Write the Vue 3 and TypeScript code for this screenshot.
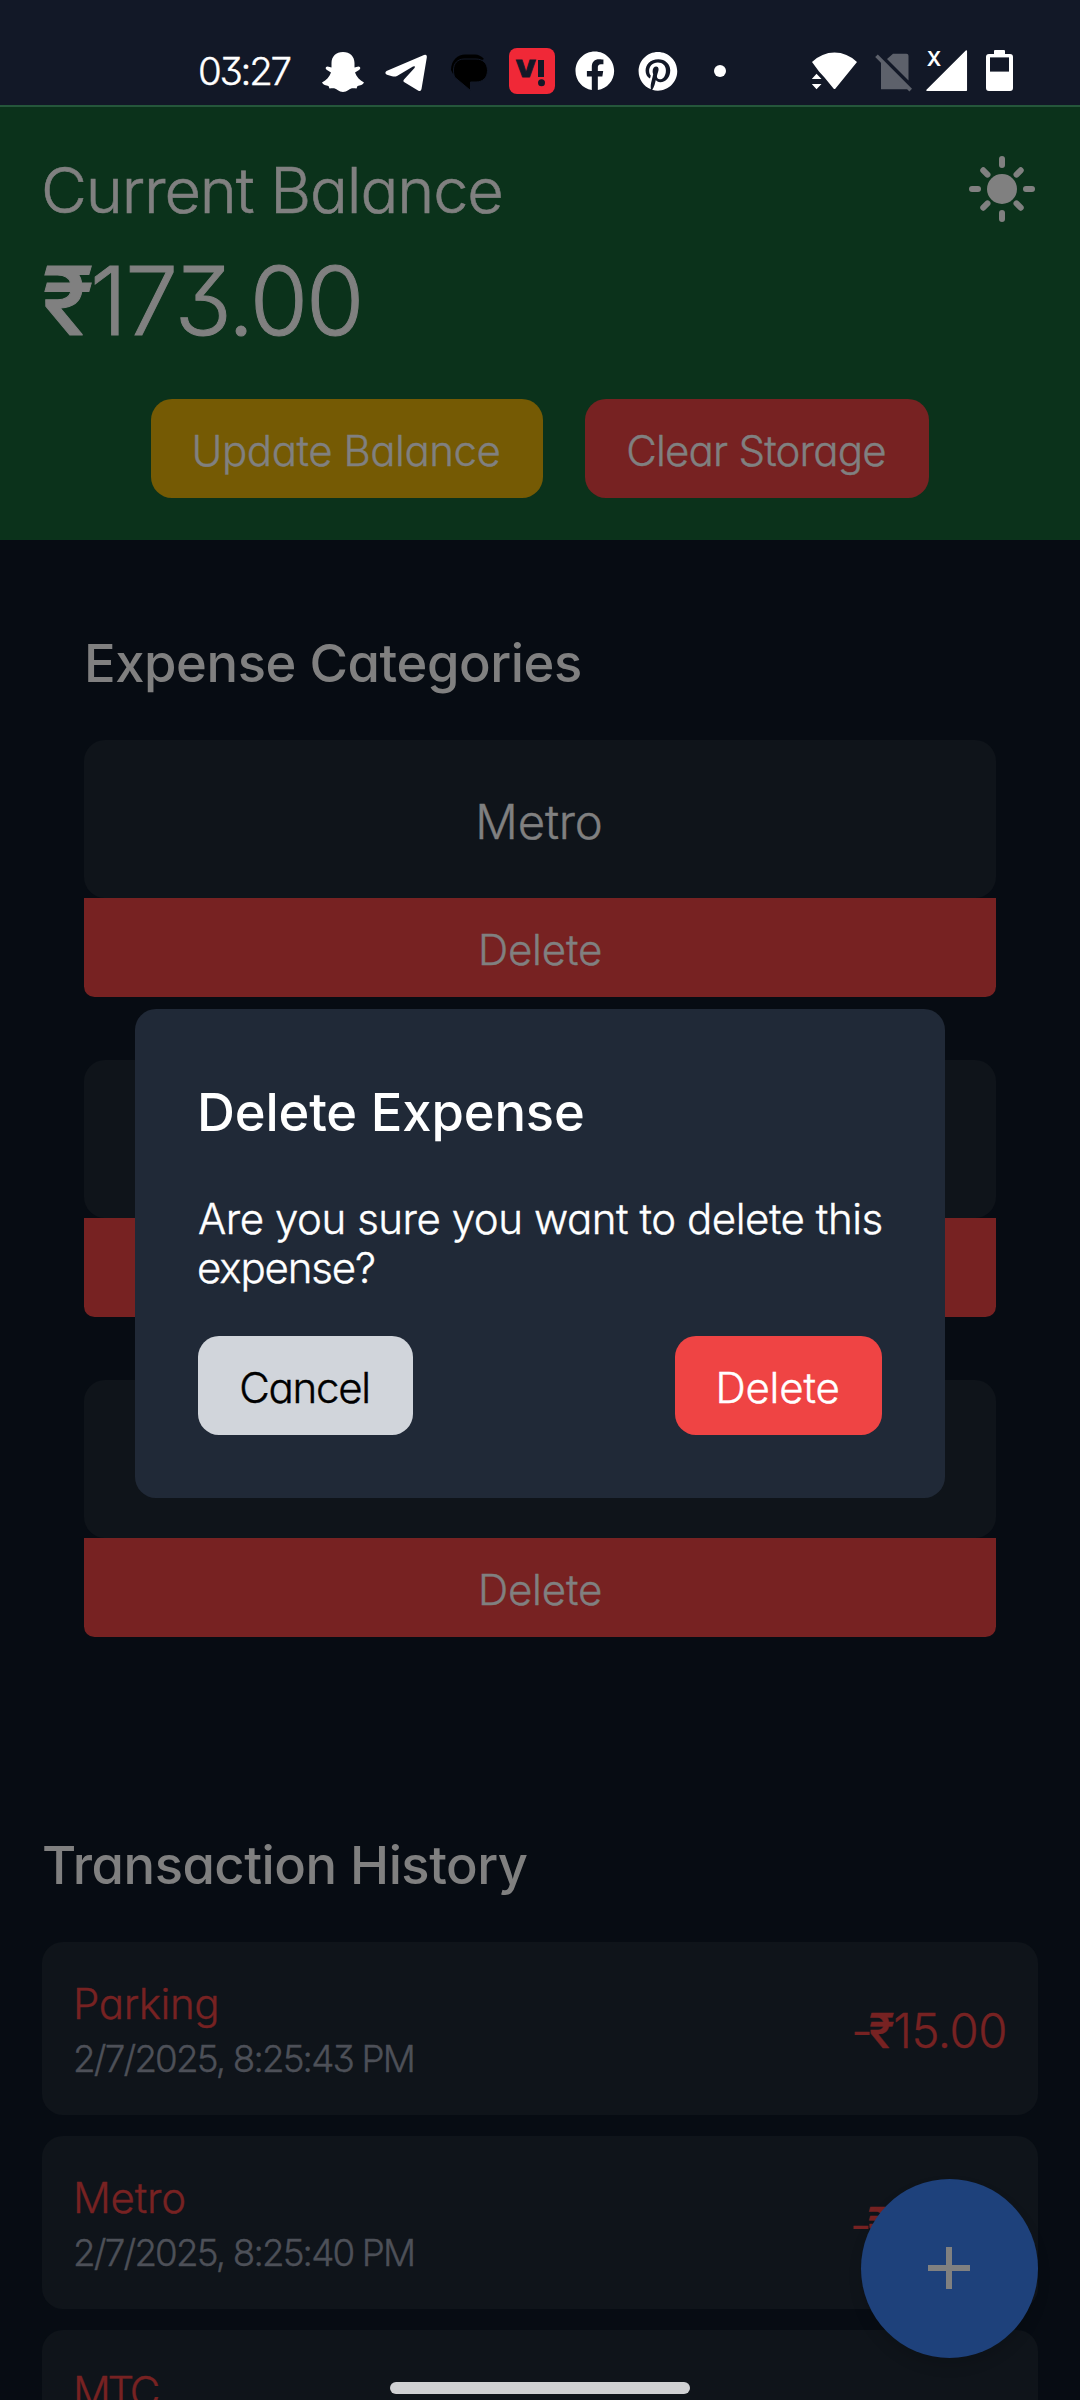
<script setup lang="ts">
interface Category { id: number; label?: string; action?: string }
interface Transaction { id: number; name: string; cls: string; date?: string; amount?: string }

const categories: Category[] = [
  { id: 1, label: 'Metro', action: 'Delete' },
  { id: 2 },
  { id: 3, action: 'Delete' },
]
const transactions: Transaction[] = [
  { id: 1, name: 'Parking', cls: 'n1', date: '2/7/2025, 8:25:43 PM', amount: '15.00' },
  { id: 2, name: 'Metro', cls: 'n2', date: '2/7/2025, 8:25:40 PM', amount: '10.00' },
  { id: 3, name: 'MTC', cls: 'n3' },
]
const rays = [0, 45, 90, 135, 180, 225, 270, 315]
</script>

<template>
  <div class="screen">
    <div class="status">
      <span class="time">03:27</span>
      <svg class="notifs" width="430" height="68" viewBox="310 37 430 68">
        <path fill="#fff" d="M343 52C350 52 354.5 56.500 354.500 63V67.500L358.500 66.500C360.800 67 360.800 69 359 70L355 72.500C356.500 77 359.500 80 364 82.500C363 85 360 85.500 357.500 86L356.500 88.600C352 88 350.500 88.500 348.500 90C345 92.600 341 92.600 337.500 90C335.500 88.500 334 88 329.500 88.600L328.500 86C326 85.500 323 85 322 82.500C326.500 80 329.500 77 331 72.500L327 70C325.200 69 325.200 67 327.500 66.500L331.500 67.500V63C331.500 56.500 336 52 343 52Z" />
        <path fill="#fff" d="M386.500 71L424 55Q427.200 54 426.800 57.500L421.500 89Q421 92 418 90.500L404 82Q402.500 81 404 79.500L414.500 68Q416 65.300 413 66.500L397 76Q395 77 392 76.300L387 74.800Q384 73 386.500 71Z" />
        <path fill="#000" d="M451 70C451 60 458 54.500 465 54.500H475Q480 54.500 484 59L470 66L453 74Z" />
        <path fill="#000" stroke="#121827" stroke-width="1" d="M464 59H476C483 59 487.500 63.500 487.500 70.500C487.500 77.500 483 82 476 82H470.500V90.500L455 77.500C453.800 75.500 453.500 73 453.500 70C453.500 63.500 457.500 59 464 59Z" />
        <rect x="509" y="48" width="46" height="46" rx="8" fill="#f02837" />
        <text class="vi" x="515.500" y="77" textLength="20.500" lengthAdjust="spacingAndGlyphs">V</text>
        <path fill="#121827" d="M538 60H544V77H538Z" />
        <circle cx="541.500" cy="82.700" r="3.500" fill="#121827" />
        <path fill="#fff" transform="translate(575.500 51.500) scale(1.61)" d="M24 12.073c0-6.627-5.373-12-12-12s-12 5.373-12 12c0 5.990 4.388 10.954 10.125 11.854v-8.385H7.078v-3.470h3.047V9.430c0-3.007 1.792-4.669 4.533-4.669 1.312 0 2.686.235 2.686.235v2.953H15.830c-1.491 0-1.956.925-1.956 1.874v2.250h3.328l-.532 3.470h-2.796v8.385C19.612 23.027 24 18.062 24 12.073z" />
        <path fill="#fff" transform="translate(638.600 52) scale(1.61)" d="M12 0C5.373 0 0 5.372 0 12c0 5.084 3.163 9.426 7.627 11.174-.105-.949-.2-2.405.042-3.441.218-.937 1.407-5.965 1.407-5.965s-.359-.719-.359-1.782c0-1.668.967-2.914 2.171-2.914 1.023 0 1.518.769 1.518 1.690 0 1.029-.655 2.568-.994 3.995-.283 1.194.599 2.169 1.777 2.169 2.133 0 3.772-2.249 3.772-5.495 0-2.873-2.064-4.882-5.012-4.882-3.414 0-5.418 2.561-5.418 5.207 0 1.031.397 2.138.893 2.738a.36.36 0 0 1 .083.345l-.333 1.360c-.053.220-.174.267-.402.161-1.499-.698-2.436-2.889-2.436-4.649 0-3.785 2.750-7.262 7.929-7.262 4.163 0 7.398 2.967 7.398 6.931 0 4.136-2.607 7.464-6.227 7.464-1.216 0-2.359-.631-2.750-1.378l-.748 2.853c-.271 1.043-1.002 2.350-1.492 3.146 1.124.347 2.317.535 3.554.535 6.627 0 12-5.373 12-12S18.627 0 12 0z" />
        <circle cx="720" cy="71" r="6" fill="#fff" />
      </svg>
      <svg class="system" width="225" height="68" viewBox="800 37 225 68">
        <path fill="#fff" d="M812 62Q822 52.500 834.500 52.500T857 62L835.500 88.500Q834.500 89.500 833.500 88.500L824.500 77.500L819 71.500Z" />
        <path fill="#fff" stroke="#121827" stroke-width="1.500" paint-order="stroke" d="M816.500 73.800L821.500 79H811.800ZM816.500 89.200L821.500 84H811.800Z" />
        <g fill="#5d616b">
          <path d="M881 61L907 87V89.200H881Z" />
          <path d="M887 59L893 53.700H906.500Q908.500 53.700 908.500 55.700V80.500Z" />
          <path d="M875.200 57L877.800 54.400L912 88.800L909.400 91.400Z" />
        </g>
        <path fill="#fff" stroke="#fff" stroke-width="1.500" stroke-linejoin="round" d="M966.300 51V90.300H927Z" />
        <text class="nosig" x="926.700" y="66" textLength="14.500" lengthAdjust="spacingAndGlyphs">X</text>
        <path fill="#fff" d="M995 50H1004Q1005 50 1005 51V54H1010Q1013 54 1013 57V88Q1013 91 1010 91H989Q986 91 986 88V57Q986 54 989 54H994V51Q994 50 995 50Z" />
        <rect x="990" y="57.400" width="19" height="14.200" fill="#121827" />
      </svg>
    </div>

    <header class="header">
      <div class="head-row">
        <h1 class="label">Current Balance</h1>
        <svg class="sun" width="66" height="66" viewBox="-33 -33 66 66">
          <circle r="15" fill="#808080" />
          <rect v-for="r in rays" :key="r" x="-3" y="-33" width="6" height="12" rx="3" fill="#808080" :transform="`rotate(${r})` + (r % 90 ? ' translate(0 3.500)' : '')" />
        </svg>
      </div>
      <div class="balance"><span class="rupee">₹</span>173.00</div>
      <div class="actions">
        <button class="btn update">Update Balance</button>
        <button class="btn clear">Clear Storage</button>
      </div>
    </header>

    <section class="categories">
      <h2 class="h-cat">Expense Categories</h2>
      <div v-for="c in categories" :key="c.id" class="category">
        <div class="cat-card">{{ c.label }}</div>
        <div class="cat-del">{{ c.action }}</div>
      </div>
    </section>

    <section class="history">
      <h2 class="h-hist">Transaction History</h2>
      <div v-for="t in transactions" :key="t.id" class="item">
        <div>
          <div class="name" :class="t.cls">{{ t.name }}</div>
          <div class="date" v-if="t.date">{{ t.date }}</div>
        </div>
        <div class="amount" v-if="t.amount"><span class="minus">-</span><span class="rupee">₹</span>{{ t.amount }}</div>
      </div>
    </section>

    <div class="fab">
      <svg width="42" height="42" viewBox="0 0 42 42"><path d="M18 0h6v18h18v6H24v18h-6V24H0v-6h18z" fill="#808080" /></svg>
    </div>
    <div class="overlay">
      <div class="modal">
        <h2 class="m-title">Delete Expense</h2>
        <p class="m-text">Are you sure you want to delete this<br><span class="l2">expense?</span></p>
        <div class="m-actions">
          <button class="btn cancel">Cancel</button>
          <button class="btn confirm">Delete</button>
        </div>
      </div>
    </div>
    <div class="pill"></div>
  </div>
</template>

<style>
body { background: #070c13; }
</style>
<style scoped>
* { box-sizing: border-box; }
.screen {
  position: relative;
  width: 1080px;
  height: 2400px;
  overflow: hidden;
  background: #070c13;
  color: #808080;
  font-family: Inter, Roboto, "Liberation Sans", sans-serif;
  font-weight: 300;
  font-feature-settings: "cv11", "cv09";
  font-size: 42px;
  -webkit-text-stroke: .4px currentColor;
}
h1, h2, p { margin: 0; font-weight: inherit; }
.status { display: flex; height: 105px; padding: 37px 55px 0 198px; background: #121827; }
.time { width: 112px; line-height: 68px; font-size: 38.5px; letter-spacing: -2.300px; color: #fff; }
.status svg { display: block; flex: none; -webkit-text-stroke: 0; }
.system { margin-left: auto; }
.vi { font: 900 23.400px Inter, sans-serif; fill: #121827; stroke: #121827; stroke-width: .8px; }
.nosig { font: 600 20.500px Inter, sans-serif; fill: #fff; }
.header { height: 435px; padding: 32px 42px 0; background: #0b321b; border-top: 2px solid #25573b; }
.head-row { display: flex; justify-content: space-between; }
.label { font-size: 63px; line-height: 103px; letter-spacing: -1.100px; margin: 0 0 1px -1px; -webkit-text-stroke-width: .6px; }
.sun { display: block; margin: 17px 3px 0 0; }
.balance { font-size: 94.500px; line-height: 115px; letter-spacing: -2.100px; -webkit-text-stroke-width: 1px; }
.rupee { font-weight: 500; letter-spacing: -4px; }
.actions { display: flex; justify-content: center; gap: 42px; margin-top: 41px; }
.btn {
  display: flex;
  align-items: center;
  justify-content: center;
  height: 99px;
  padding: 3px 2px 0 0;
  border: 0;
  border-radius: 21px;
  font: inherit;
  font-feature-settings: inherit;
  color: inherit;
  white-space: nowrap;
}
.update { width: 392px; background: #755a04; letter-spacing: -.460px; }
.clear { width: 344px; background: #772222; letter-spacing: -.790px; }
.h-cat, .h-hist, .m-title { font-size: 52.500px; line-height: 80px; font-weight: 500; -webkit-text-stroke-width: 0; }
.categories { padding: 83px 84px 0; }
.h-cat { letter-spacing: -.430px; margin: 0 0 37px 0; }
.category { margin-bottom: 63px; }
.cat-card {
  display: flex;
  align-items: center;
  justify-content: center;
  height: 158px;
  padding: 4px 2px 0 0;
  border-radius: 21px;
  background: #0f141a;
  font-size: 47.250px;
  letter-spacing: -.180px;
}
.cat-del {
  display: flex;
  align-items: center;
  justify-content: center;
  height: 99px;
  padding-top: 3px;
  border-radius: 0 0 10.500px 10.500px;
  background: #772222;
  letter-spacing: -.180px;
}
.history { padding: 125px 42px 0; }
.h-hist { letter-spacing: -.500px; margin-bottom: 37px; }
.item {
  display: flex;
  justify-content: space-between;
  height: 173px;
  margin-bottom: 21px;
  padding: 34px 31px 0;
  border-radius: 21px;
  background: #0f141a;
}
.name { line-height: 56px; color: #772222; }
.n1 { letter-spacing: -.400px; }
.n2 { letter-spacing: -.200px; }
.n3 { letter-spacing: -3.200px; }
.date { font-size: 36.750px; line-height: 54px; letter-spacing: -1.830px; color: #4d5058; }
.amount { font-size: 47.250px; line-height: 109px; letter-spacing: -.420px; color: #772222; }
.amount .rupee { letter-spacing: -1.500px; }
.amount .minus { letter-spacing: -4px; }
.fab {
  position: absolute;
  left: 861px;
  top: 2179px;
  width: 177px;
  height: 179px;
  padding: 0 1px 1px 0;
  border-radius: 50%;
  background: #1e417b;
  box-shadow: 0 8px 14px rgba(0, 0, 0, .12);
  display: flex;
  align-items: center;
  justify-content: center;
}
.overlay {
  position: absolute;
  inset: 107px 0 0;
  display: flex;
  align-items: center;
  justify-content: center;
}
.modal { width: 810px; height: 489px; padding: 63px; border-radius: 21px; background: #202937; color: #fff; }
.m-title { letter-spacing: -.160px; margin-left: -1px; }
.m-text { margin-top: 42px; line-height: 49px; letter-spacing: -.460px; white-space: nowrap; }
.l2 { letter-spacing: -1.150px; margin-left: -1px; }
.m-actions { display: flex; justify-content: space-between; margin-top: 44px; }
.cancel { width: 215px; background: #d1d5db; color: #000; letter-spacing: -1.280px; }
.confirm { width: 207px; background: #ef4444; color: #fff; letter-spacing: -.180px; }
.pill { position: absolute; left: 390px; top: 2382px; width: 300px; height: 12px; border-radius: 6px; background: #d0d1d3; }
</style>
